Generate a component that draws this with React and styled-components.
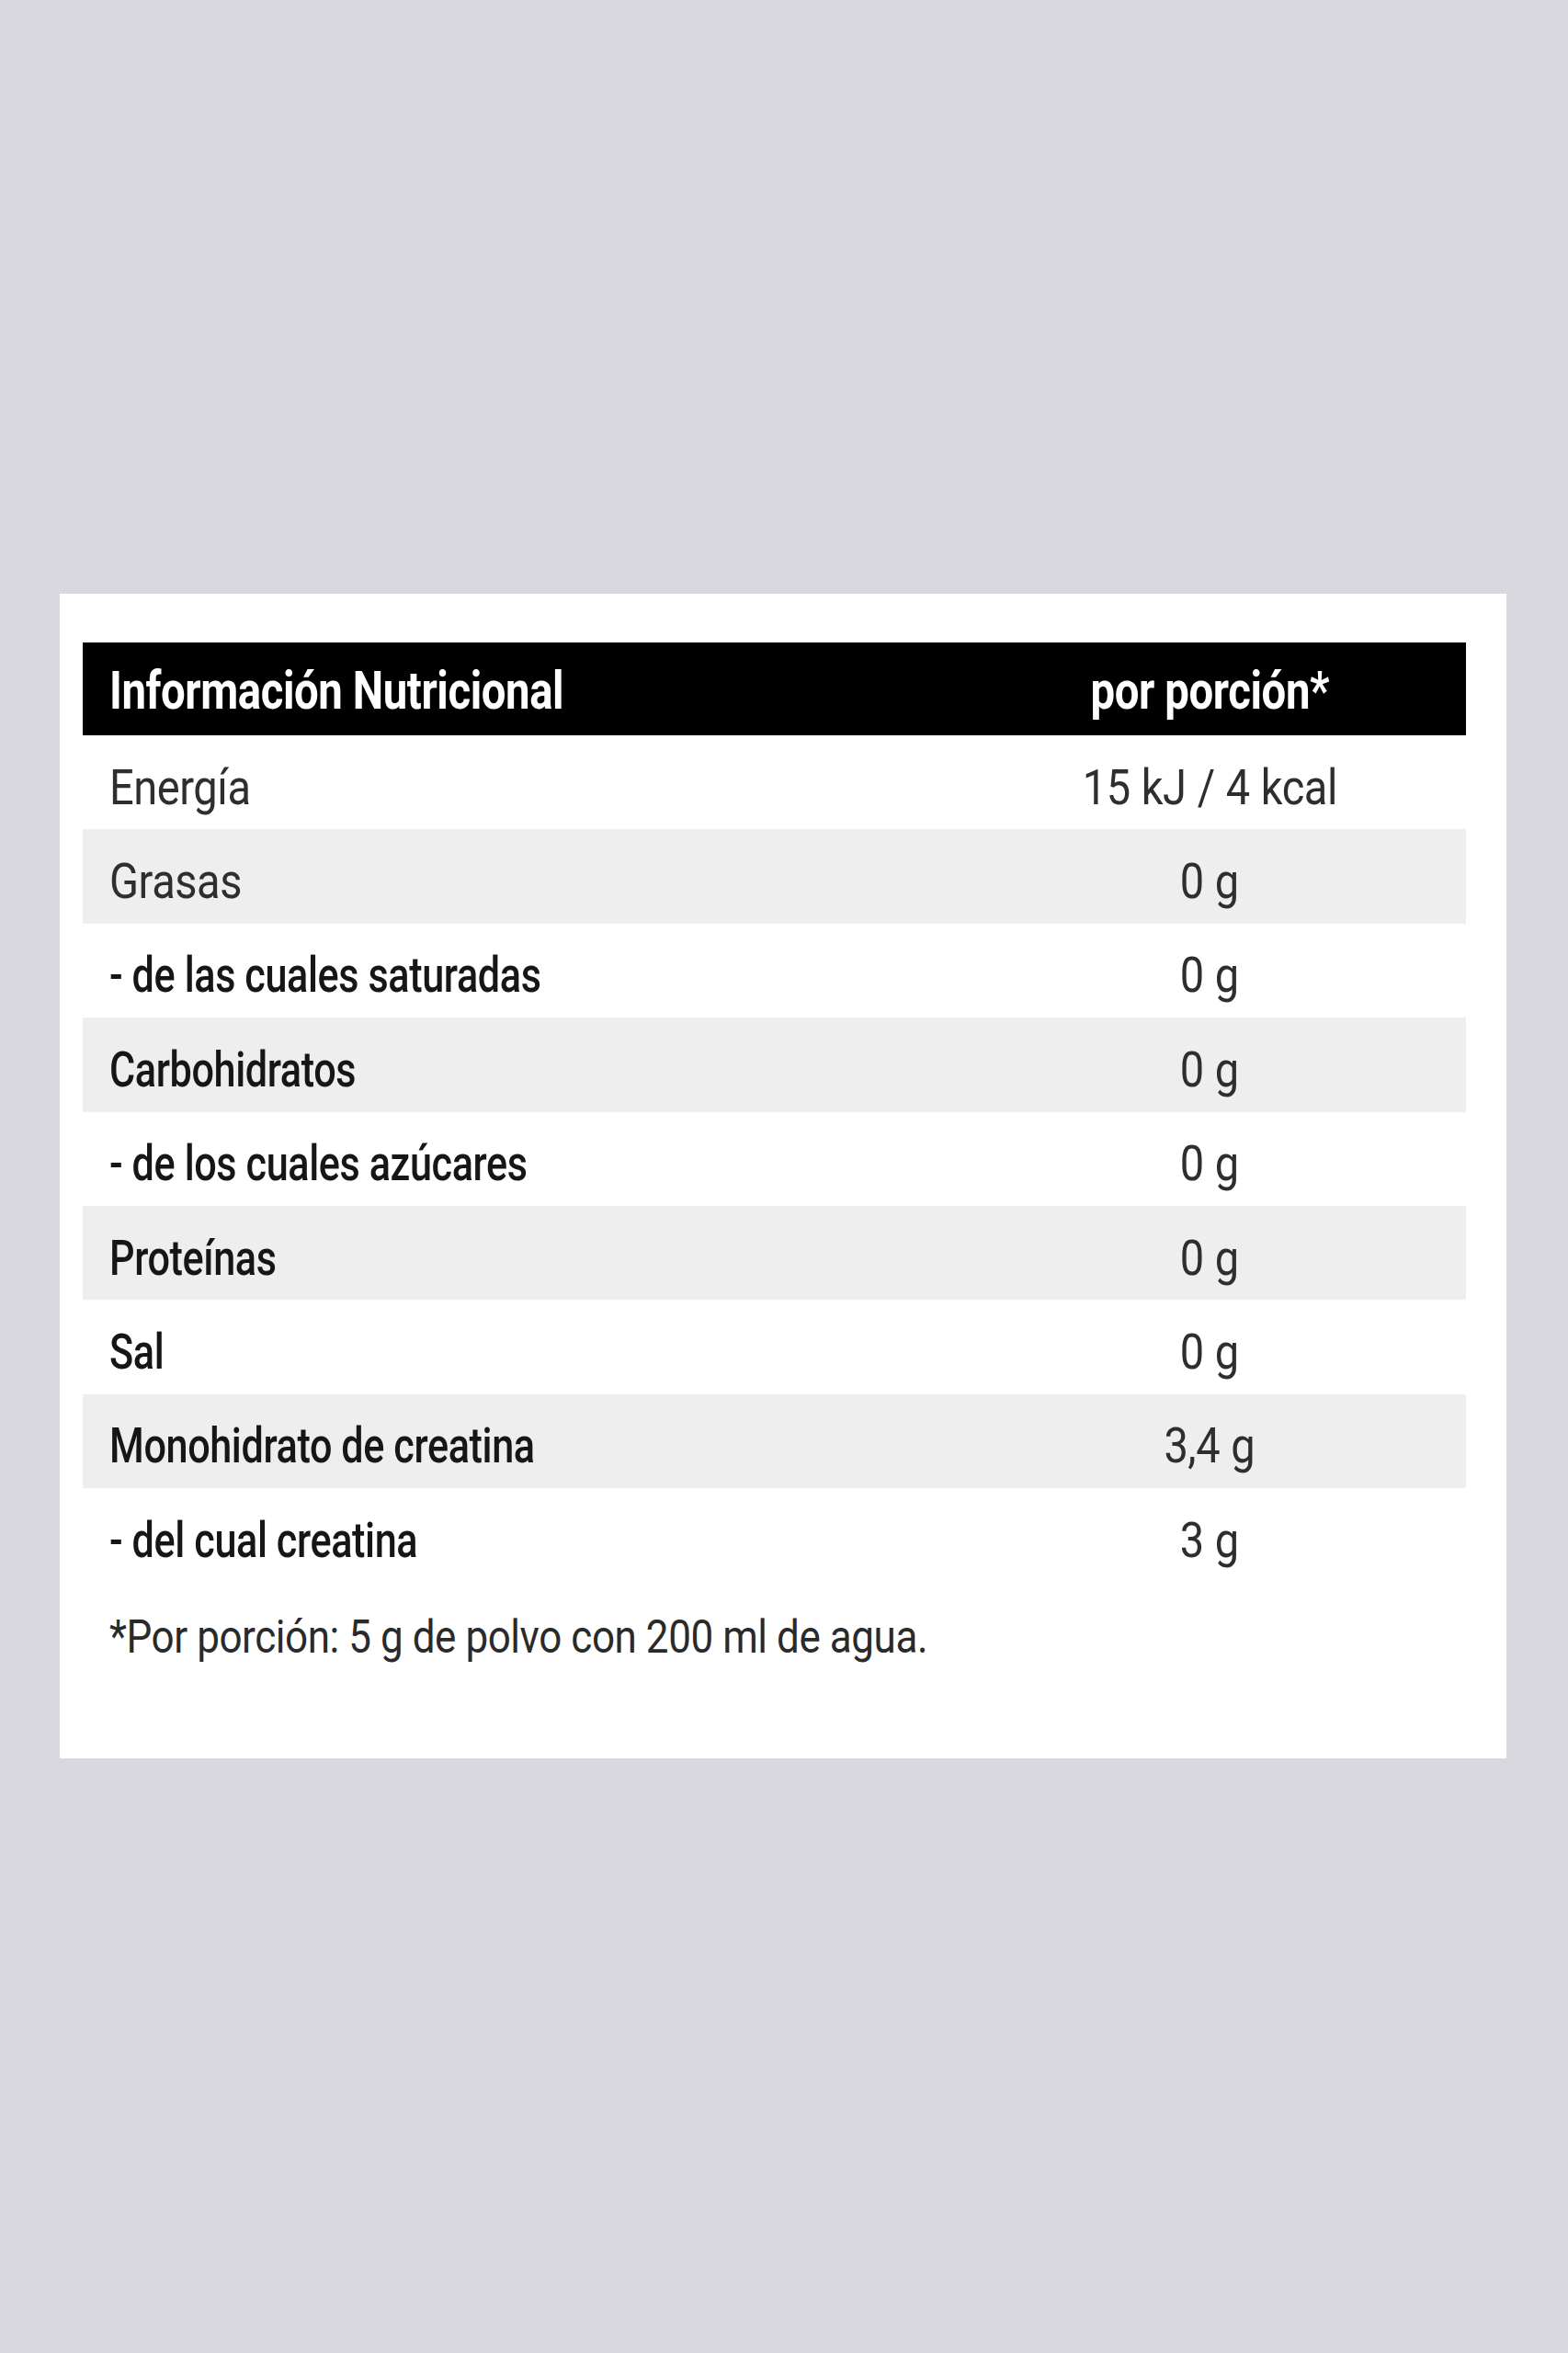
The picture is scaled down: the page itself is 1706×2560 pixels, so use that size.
import React from "react";
import styled, { createGlobalStyle } from "styled-components";

const Global = createGlobalStyle`
  html, body {
    margin: 0;
    padding: 0;
    background: #d9d8de;
  }
  body {
    font-family: Roboto, "Liberation Sans", sans-serif;
  }
`;

const Page = styled.div`
  min-height: 2560px;
  padding-top: 646px;
  padding-left: 65px;
  box-sizing: border-box;
`;

const Card = styled.section`
  width: 1574px;
  height: 1267px;
  box-sizing: border-box;
  background: #ffffff;
  padding: 53px 44px 0 25px;
`;

const Table = styled.div`
  display: flex;
  flex-direction: column;
`;

const Row = styled.div`
  display: grid;
  grid-template-columns: 1fr 558px;
  align-items: center;
  height: ${(p) => (p.$head ? "101px" : "102.4px")};
  background: ${(p) => (p.$head ? "#000000" : p.$shade ? "#eeeeee" : "#ffffff")};
`;

const NameCell = styled.div`
  padding-left: 29px;
  padding-top: ${(p) => (p.$head ? "4px" : "11px")};
  white-space: nowrap;
`;

const ValueCell = styled.div`
  text-align: center;
  padding-top: ${(p) => (p.$head ? "4px" : "11px")};
  white-space: nowrap;
`;

const Text = styled.span`
  display: inline-block;
  font-size: ${(p) => (p.$head ? "57px" : "54px")};
  font-weight: ${(p) => (p.$head ? 700 : p.$strong ? 500 : 400)};
  color: ${(p) => (p.$head ? "#ffffff" : p.$strong ? "#161616" : "#2e2e2e")};
  line-height: 1;
  letter-spacing: -0.5px;
  word-spacing: ${(p) => (p.$center && !p.$head ? "1px" : "0")};
  transform: scaleX(${(p) => (p.$head ? 0.83 : p.$strong ? 0.8 : 0.87)});
  transform-origin: ${(p) => (p.$center ? "center" : "left")};
`;

const Note = styled.p`
  margin: 0;
  padding: 34px 0 0 29px;
  white-space: nowrap;
`;

const NoteText = styled.span`
  display: inline-block;
  font-size: 50px;
  color: #2a2a2a;
  line-height: 1;
  letter-spacing: -0.5px;
  transform: scaleX(0.88);
  transform-origin: left;
`;

const rows = [
  { name: "Energía", value: "15 kJ / 4 kcal" },
  { name: "Grasas", value: "0 g" },
  { name: "- de las cuales saturadas", value: "0 g", strong: true },
  { name: "Carbohidratos", value: "0 g", strong: true },
  { name: "- de los cuales azúcares", value: "0 g", strong: true },
  { name: "Proteínas", value: "0 g", strong: true },
  { name: "Sal", value: "0 g", strong: true },
  { name: "Monohidrato de creatina", value: "3,4 g", strong: true },
  { name: "- del cual creatina", value: "3 g", strong: true },
];

export default function App() {
  return (
    <Page>
      <Global />
      <Card>
        <Table>
          <Row $head>
            <NameCell $head>
              <Text $head>Información Nutricional</Text>
            </NameCell>
            <ValueCell $head>
              <Text $head $center>por porción*</Text>
            </ValueCell>
          </Row>
          {rows.map((r, i) => (
            <Row key={r.name} $shade={i % 2 === 1}>
              <NameCell>
                <Text $strong={r.strong}>{r.name}</Text>
              </NameCell>
              <ValueCell>
                <Text $center>{r.value}</Text>
              </ValueCell>
            </Row>
          ))}
        </Table>
        <Note>
          <NoteText>*Por porción: 5 g de polvo con 200 ml de agua.</NoteText>
        </Note>
      </Card>
    </Page>
  );
}
